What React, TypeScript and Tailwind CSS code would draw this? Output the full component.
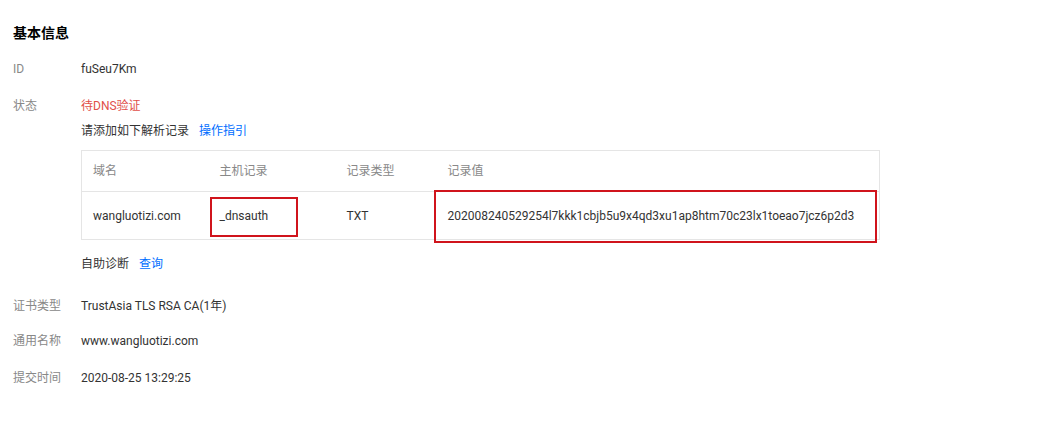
import React from "react";

const rows = [
  { label: "证书类型", value: "TrustAsia TLS RSA CA(1年)" },
  { label: "通用名称", value: "www.wangluotizi.com" },
  { label: "提交时间", value: "2020-08-25 13:29:25" },
];

function Field({ label, children, className = "" }: { label: string; children: React.ReactNode; className?: string }) {
  return (
    <div className={`flex ${className}`}>
      <div className="w-[68px] shrink-0 leading-5 text-[#888]">{label}</div>
      <div className="flex-1 leading-5 text-[#333]">{children}</div>
    </div>
  );
}

export default function App() {
  return (
    <div
      className="h-[444px] w-[1059px] bg-white px-[13px] pt-[23px] text-[12px]"
      style={{ fontFamily: 'Roboto, "Noto Sans CJK SC", sans-serif' }}
    >
      <h3 className="text-[14px] font-bold leading-5 text-black">基本信息</h3>

      <Field label="ID" className="mt-[16px]">fuSeu7Km</Field>

      <Field label="状态" className="mt-[17px]">
        <div className="text-[#e1504a]">待DNS验证</div>
        <div className="mt-[5px]">
          请添加如下解析记录<a className="ml-[10px] text-[#006eff]">操作指引</a>
        </div>

        {/* DNS record table */}
        <div className="relative mt-[9px] w-[799px]">
          <table className="w-full border-collapse border border-[#e5e5e5] text-left">
            <colgroup>
              <col className="w-[127px]" />
              <col className="w-[127px]" />
              <col className="w-[101px]" />
              <col />
            </colgroup>
            <thead>
              <tr className="h-[41px] border-b border-[#e5e5e5] text-[#888]">
                <th className="px-[11px] font-normal">域名</th>
                <th className="px-[11px] font-normal">主机记录</th>
                <th className="px-[11px] font-normal">记录类型</th>
                <th className="px-[11px] font-normal">记录值</th>
              </tr>
            </thead>
            <tbody>
              <tr className="h-[48px] text-[#333]">
                <td className="px-[11px]">wangluotizi.com</td>
                <td className="px-[11px]">_dnsauth</td>
                <td className="px-[11px]">TXT</td>
                <td className="px-[11px]">202008240529254l7kkk1cbjb5u9x4qd3xu1ap8htm70c23lx1toeao7jcz6p2d3</td>
              </tr>
            </tbody>
          </table>
          {/* annotation boxes */}
          <div className="pointer-events-none absolute left-[129px] top-[47px] h-[40px] w-[88px] border-2 border-[#d0141c]" />
          <div className="pointer-events-none absolute left-[353px] top-[40px] h-[53px] w-[443px] border-2 border-[#d0141c]" />
        </div>

        <div className="mt-[14px]">
          自助诊断<a className="ml-[10px] text-[#006eff]">查询</a>
        </div>
      </Field>

      <Field label={rows[0].label} className="mt-[22px]">{rows[0].value}</Field>
      <Field label={rows[1].label} className="mt-[15px]">{rows[1].value}</Field>
      <Field label={rows[2].label} className="mt-[17px]">{rows[2].value}</Field>
    </div>
  );
}
